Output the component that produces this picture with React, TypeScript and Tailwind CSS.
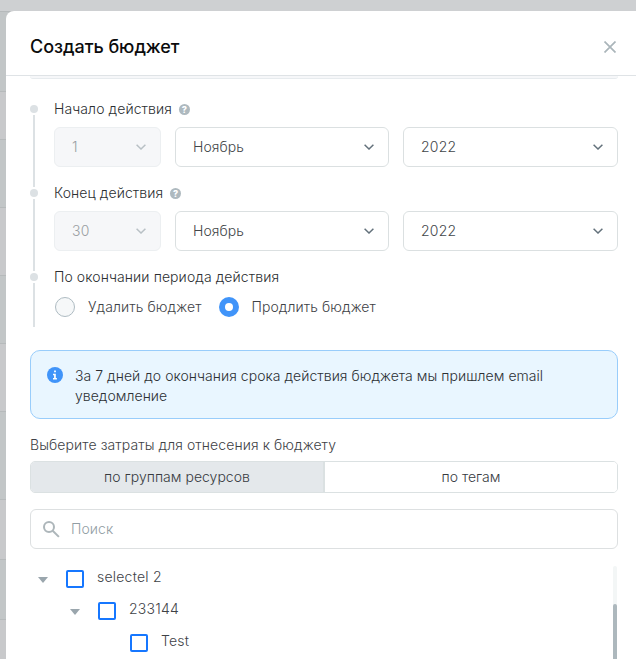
import React from "react";

const backdropRows = [
  { id: "a", className: "h-20 bg-[#c2c6c7]" },
  { id: "b", className: "h-12 bg-[#c8c9cb]" },
  { id: "c", className: "h-[68px] bg-[#c2c6c7]" },
  { id: "d", className: "h-[68px] bg-[#c8c9cb]" },
  { id: "e", className: "h-[68px] bg-[#c2c6c7]" },
  { id: "f", className: "h-[68px] bg-[#c8c9cb]" },
  { id: "g", className: "h-[88px] bg-[#c2c6c7]" },
  { id: "h", className: "h-[60px] bg-[#c8c9cb]" },
  { id: "i", className: "h-[60px] bg-[#c2c6c7]" },
  { id: "j", className: "h-[60px] bg-[#c8c9cb]" },
];

function Chevron() {
  return (
    <svg width="10" height="6" viewBox="0 0 10 6" fill="none" stroke="currentColor" strokeWidth="1.5">
      <path d="M0.6 0.7 5 5 9.4 0.7" />
    </svg>
  );
}

const selectWidths = {
  day: "w-[107px]",
  month: "w-[214px]",
  year: "w-[215px]",
};

function Select({
  value,
  size,
  disabled = false,
}: {
  value: string;
  size: keyof typeof selectWidths;
  disabled?: boolean;
}) {
  return (
    <button
      disabled={disabled}
      className={
        "flex h-10 shrink-0 items-center justify-between rounded-md border pr-[14px] pl-[17px] " +
        selectWidths[size] +
        (disabled
          ? " border-[#eceff1] bg-[#f6f7f9] text-[#999ea2]"
          : " border-[#dbe0e1] bg-white text-[#424649]")
      }
    >
      <span className={size === "month" ? "" : "tracking-[0.25px]"}>{value}</span>
      <span className={disabled ? "text-[#b8c0c5]" : "text-[#63717b]"}>
        <Chevron />
      </span>
    </button>
  );
}

function Help() {
  return (
    <span className="ml-[7px] flex size-[11px] items-center justify-center rounded-full bg-[#aeb9bf] text-[9px] leading-none font-extrabold tracking-normal text-white">
      ?
    </span>
  );
}

function Step({
  label,
  help = false,
  className,
  children,
}: {
  label: string;
  help?: boolean;
  className: string;
  children: React.ReactNode;
}) {
  return (
    <section className={"flex " + className}>
      <div className="flex w-2 shrink-0 flex-col items-center pt-[6px]">
        <span className="size-2 shrink-0 rounded-full bg-[#dce1e4]" />
        <span className="mt-[2px] -mb-[4px] w-[2px] flex-1 bg-[#dce1e4]" />
      </div>
      <div className="ml-4 min-w-0 flex-1">
        <div className="flex h-5 items-center text-[#2c2f32]">
          {label}
          {help && <Help />}
        </div>
        {children}
      </div>
    </section>
  );
}

function TreeRow({ label, className, open = false }: { label: string; className: string; open?: boolean }) {
  return (
    <div className={"flex h-8 items-center " + className}>
      <span className="w-[28px] pt-[2px] text-[#9aa6ad]">
        {open && (
          <svg width="10" height="6" viewBox="0 0 10 6" fill="currentColor">
            <path d="M0 0h10L5 6z" />
          </svg>
        )}
      </span>
      <span className="size-[18px] shrink-0 rounded-[2px] border-2 border-[#1677ff] bg-white" />
      <span className="ml-[13px] pb-1 tracking-[0.22px] text-[#3e4246]">{label}</span>
    </div>
  );
}

export default function App() {
  return (
    <div className="relative h-[659px] w-[636px] overflow-hidden bg-[#ced0d2] font-['Inter',sans-serif] text-[14px] leading-5 font-[350] tracking-[0.09px]">
      <div className="pt-[11px]">
        {backdropRows.map((row) => (
          <div key={row.id} className={"border-t border-[#b6babb] " + row.className} />
        ))}
      </div>
      <main className="absolute top-[11px] right-0 bottom-0 left-[6px] flex flex-col overflow-hidden rounded-tl-lg bg-white">
        <header className="flex h-[65px] shrink-0 items-center justify-between border-b border-[#dfe3e6] pt-2 pr-5 pl-6">
          <h1 className="text-[18px] leading-6 font-medium tracking-[-0.05px] text-[#0b0b0c]">Создать бюджет</h1>
          <svg width="12" height="12" viewBox="0 0 12 12" fill="none" stroke="#aab5ba" strokeWidth="1.7">
            <path d="m.5.5 11 11M11.5.5l-11 11" />
          </svg>
        </header>
        <div className="flex flex-1 flex-col pr-[18px] pl-6">
          <div className="h-[3px] shrink-0 rounded-b-md border-b border-[#e7ebee] bg-[#f6f7f9]" />
          <Step label="Начало действия" help className="mt-5 h-[84px]">
            <div className="mt-2 flex gap-[14px]">
              <Select size="day" value="1" disabled />
              <Select size="month" value="Ноябрь" />
              <Select size="year" value="2022" />
            </div>
          </Step>
          <Step label="Конец действия" help className="h-[84px]">
            <div className="mt-2 flex gap-[14px]">
              <Select size="day" value="30" disabled />
              <Select size="month" value="Ноябрь" />
              <Select size="year" value="2022" />
            </div>
          </Step>
          <Step label="По окончании периода действия" className="h-[56px]">
            <div className="mt-[10px] flex h-5 items-center pl-[1px] text-[#3e4246]">
              <span className="size-5 rounded-full border border-[#aebbc2] bg-[#f6f8f9]" />
              <span className="ml-[13px]">Удалить бюджет</span>
              <span className="ml-[18px] flex size-5 items-center justify-center rounded-full bg-[#4094f9]">
                <span className="size-2 rounded-full bg-white" />
              </span>
              <span className="ml-3">Продлить бюджет</span>
            </div>
          </Step>
          <div className="mt-[27px] flex h-[69px] shrink-0 rounded-[10px] border border-[#99cdfb] bg-[#e9f6ff] px-4 pt-[15px]">
            <svg className="mt-[1px] shrink-0" width="16" height="16" viewBox="0 0 16 16">
              <circle cx="8" cy="8" r="8" fill="#4094f9" />
              <path d="M7.1 3.5h1.8v1.7H7.1zM6 6.8h2.8v4.3h1.1v1.4H6v-1.4h1.1V8.2H6z" fill="white" />
            </svg>
            <p className="ml-3 w-[490px] tracking-[0.04px] text-[#2c3034]">
              За 7 дней до окончания срока действия бюджета мы пришлем email уведомление
            </p>
          </div>
          <div className="mt-4 text-[#3e4246]">Выберите затраты для отнесения к бюджету</div>
          <div className="mt-[6px] flex h-8 shrink-0 overflow-hidden rounded-[5px] border border-[#dbe1e2] tracking-[0.02px] text-[#373b3f]">
            <button className="w-[294px] border-r-2 border-[#dbe1e2] bg-[#e4e8eb]">по группам ресурсов</button>
            <button className="flex-1 bg-white">по тегам</button>
          </div>
          <div className="mt-4 flex h-10 shrink-0 items-center rounded-md border border-[#dde0e1] pl-3 text-[#929ea4]">
            <svg width="17" height="17" viewBox="0 0 17 17" fill="none" stroke="#adb6ba" strokeWidth="2">
              <circle cx="6" cy="6" r="5" />
              <path d="m9.7 9.7 6.2 6.2" />
            </svg>
            <span className="ml-[11px]">Поиск</span>
          </div>
          <div className="flex flex-1 justify-between pt-[14px] pr-[1px]">
            <div>
              <TreeRow label="selectel 2" className="pl-2" open />
              <TreeRow label="233144" className="pl-10" open />
              <TreeRow label="Test" className="pl-[72px]" />
            </div>
            <div className="mt-[3px] flex w-1 flex-col rounded-t-full bg-[#f3f6f6]">
              <span className="mt-[38px] flex-1 rounded-t-full bg-[#adb8bd]" />
            </div>
          </div>
        </div>
      </main>
    </div>
  );
}
